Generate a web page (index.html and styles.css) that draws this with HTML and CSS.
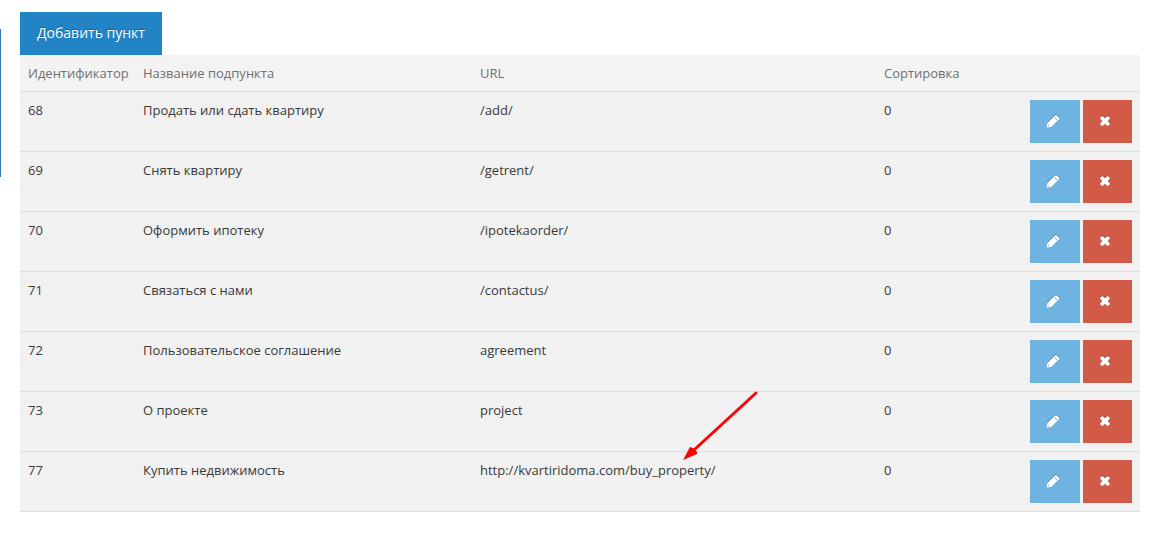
FILE: index.html
```html
<!DOCTYPE html>
<html lang="ru">
<head>
    <meta charset="UTF-8">
    <meta name="viewport" content="width=device-width, initial-scale=1.0">
    <title>Пункты меню</title>
    <link rel="stylesheet" href="styles.css">
</head>
<body>

    <svg class="sprite" aria-hidden="true">
        <symbol id="pencil" viewBox="0 0 14 14">
            <path fill-rule="evenodd" d="M9 1.4 Q9.9 .6 10.8 1.4 L12.8 3.4 Q13.6 4.3 12.8 5.2 L5 13 L1 13.4 Q.7 13.4 .7 13 L1.2 9.2 Z M8.7 3.1 L8.3 3.5 L10.7 5.9 L11.1 5.5 Z M2.1 11 L1.9 12.2 L3.1 12 Z"/>
        </symbol>
        <symbol id="remove" viewBox="0 0 14 14">
            <path d="M3.6 2.4 Q4.3 1.8 5 2.4 L7 4.3 L9 2.4 Q9.7 1.8 10.4 2.4 L11.6 3.6 Q12.2 4.3 11.6 5 L9.7 7 L11.6 9 Q12.2 9.7 11.6 10.4 L10.4 11.6 Q9.7 12.2 9 11.6 L7 9.7 L5 11.6 Q4.3 12.2 3.6 11.6 L2.4 10.4 Q1.8 9.7 2.4 9 L4.3 7 L2.4 5 Q1.8 4.3 2.4 3.6 Z"/>
        </symbol>
    </svg>

    <div class="page">
        <div class="sidebar-edge"></div>
        <main class="content">
            <button type="button" class="btn btn-add">Добавить пункт</button>
            <table class="table">
                <colgroup>
                    <col class="col-id">
                    <col class="col-name">
                    <col class="col-url">
                    <col class="col-sort">
                    <col class="col-actions">
                </colgroup>
                <thead>
                    <tr>
                        <th>Идентификатор</th>
                        <th>Название подпункта</th>
                        <th>URL</th>
                        <th>Сортировка</th>
                        <th></th>
                    </tr>
                </thead>
                <tbody>
                    <tr>
                        <td>68</td>
                        <td>Продать или сдать квартиру</td>
                        <td>/add/</td>
                        <td>0</td>
                        <td>
                            <div class="actions">
                                <button type="button" class="btn btn-edit" aria-label="Редактировать"><svg class="icon"><use href="#pencil"/></svg></button>
                                <button type="button" class="btn btn-delete" aria-label="Удалить"><svg class="icon"><use href="#remove"/></svg></button>
                            </div>
                        </td>
                    </tr>
                    <tr>
                        <td>69</td>
                        <td>Снять квартиру</td>
                        <td>/getrent/</td>
                        <td>0</td>
                        <td>
                            <div class="actions">
                                <button type="button" class="btn btn-edit" aria-label="Редактировать"><svg class="icon"><use href="#pencil"/></svg></button>
                                <button type="button" class="btn btn-delete" aria-label="Удалить"><svg class="icon"><use href="#remove"/></svg></button>
                            </div>
                        </td>
                    </tr>
                    <tr>
                        <td>70</td>
                        <td>Оформить ипотеку</td>
                        <td>/ipotekaorder/</td>
                        <td>0</td>
                        <td>
                            <div class="actions">
                                <button type="button" class="btn btn-edit" aria-label="Редактировать"><svg class="icon"><use href="#pencil"/></svg></button>
                                <button type="button" class="btn btn-delete" aria-label="Удалить"><svg class="icon"><use href="#remove"/></svg></button>
                            </div>
                        </td>
                    </tr>
                    <tr>
                        <td>71</td>
                        <td>Связаться с нами</td>
                        <td>/contactus/</td>
                        <td>0</td>
                        <td>
                            <div class="actions">
                                <button type="button" class="btn btn-edit" aria-label="Редактировать"><svg class="icon"><use href="#pencil"/></svg></button>
                                <button type="button" class="btn btn-delete" aria-label="Удалить"><svg class="icon"><use href="#remove"/></svg></button>
                            </div>
                        </td>
                    </tr>
                    <tr>
                        <td>72</td>
                        <td>Пользовательское соглашение</td>
                        <td>agreement</td>
                        <td>0</td>
                        <td>
                            <div class="actions">
                                <button type="button" class="btn btn-edit" aria-label="Редактировать"><svg class="icon"><use href="#pencil"/></svg></button>
                                <button type="button" class="btn btn-delete" aria-label="Удалить"><svg class="icon"><use href="#remove"/></svg></button>
                            </div>
                        </td>
                    </tr>
                    <tr>
                        <td>73</td>
                        <td>О проекте</td>
                        <td>project</td>
                        <td>0</td>
                        <td>
                            <div class="actions">
                                <button type="button" class="btn btn-edit" aria-label="Редактировать"><svg class="icon"><use href="#pencil"/></svg></button>
                                <button type="button" class="btn btn-delete" aria-label="Удалить"><svg class="icon"><use href="#remove"/></svg></button>
                            </div>
                        </td>
                    </tr>
                    <tr>
                        <td>77</td>
                        <td>Купить недвижимость</td>
                        <td class="marked">
                            http://kvartiridoma.com/buy_property/
                            <svg class="arrow" viewBox="0 0 76 70" aria-hidden="true">
                                <path d="M73 2 L11 59" fill="none" stroke="#fa0505" stroke-width="3" stroke-linecap="round"/>
                                <path d="M0 69 L7 56 L10 57 L14 61 L14 63 Z" fill="#fa0505"/>
                            </svg>
                        </td>
                        <td>0</td>
                        <td>
                            <div class="actions">
                                <button type="button" class="btn btn-edit" aria-label="Редактировать"><svg class="icon"><use href="#pencil"/></svg></button>
                                <button type="button" class="btn btn-delete" aria-label="Удалить"><svg class="icon"><use href="#remove"/></svg></button>
                            </div>
                        </td>
                    </tr>
                </tbody>
            </table>
        </main>
    </div>

</body>
</html>
```

FILE: styles.css
```css
body {
    margin: 0;
    background-color: #fff;
    color: #393939;
    font-family: "Open Sans", sans-serif;
    font-size: 13px;
    line-height: 20px;
}

.sprite {
    display: none;
}

.page {
    display: flex;
    align-items: flex-start;
    gap: 19px;
    padding: 12px 12px 28px 0;
}

/* right border of the side menu */
.sidebar-edge {
    width: 1px;
    height: 148px;
    margin-top: 17px;
    background-color: #3a76ab;
}

.content {
    flex: 1;
}

.btn {
    display: block;
    height: 43px;
    border: none;
    border-radius: 0;
    color: #fff;
    font-family: inherit;
    font-size: 14px;
    line-height: 20px;
    cursor: pointer;
}

.btn-add {
    padding: 0 17px 2px;
    background-color: #2283c5;
    text-shadow: 0 -1px 0 rgba(0, 0, 0, 0.25);
}

.btn-edit,
.btn-delete {
    flex: 1;
    padding: 0 4px 2px 0;
}

.btn-edit {
    background-color: #6fb3e0;
}

.btn-delete {
    background-color: #d15b47;
}

.icon {
    display: block;
    width: 14px;
    height: 14px;
    margin: 0 auto;
    fill: #fff;
    filter: drop-shadow(0 -1px 0 rgba(0, 0, 0, 0.25));
}

.table {
    width: 100%;
    table-layout: fixed;
    border-collapse: separate;
    border-spacing: 0;
    border-bottom: 1px solid #ddd;
    background-color: #f1f1f1;
}

.table th,
.table td {
    padding: 8px;
    text-align: left;
    vertical-align: top;
}

.table th {
    background-color: #f3f3f3;
    color: #707070;
    font-weight: 500;
    white-space: nowrap;
}

.table td {
    border-top: 1px solid #ddd;
}

.col-id {
    width: 115px;
}

.col-name {
    width: 337px;
}

.col-sort {
    width: 146px;
}

.col-actions {
    width: 118px;
}

.actions {
    display: flex;
    gap: 3px;
}

.marked {
    position: relative;
}

.arrow {
    position: absolute;
    top: -61px;
    left: 211px;
    width: 76px;
    height: 70px;
}
```
